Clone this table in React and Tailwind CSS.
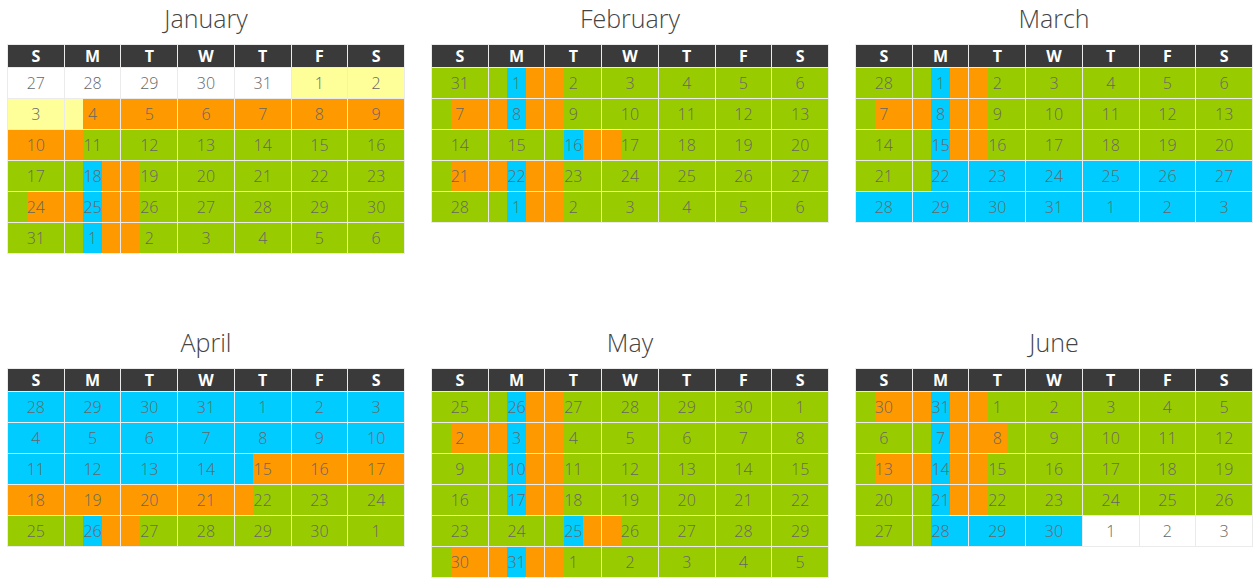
import React from "react";

const COLORS = {
  g: "bg-[#99cc00]",
  o: "bg-[#ff9900]",
  b: "bg-[#00ccff]",
  y: "bg-[#ffff99]",
  w: "bg-white",
};

const DAYS = ["S", "M", "T", "W", "T", "F", "S"];

const months = [
  {
    name: "January",
    rows: [
      "27:w 28:w 29:w 30:w 31:w 1:y 2:y",
      "3:y 4:yoo 5:o 6:o 7:o 8:o 9:o",
      "10:o 11:ogg 12:g 13:g 14:g 15:g 16:g",
      "17:g 18:gbo 19:ogg 20:g 21:g 22:g 23:g",
      "24:goo 25:obo 26:ogg 27:g 28:g 29:g 30:g",
      "31:g 1:gbo 2:ogg 3:g 4:g 5:g 6:g",
    ],
  },
  {
    name: "February",
    rows: [
      "31:g 1:gbo 2:ogg 3:g 4:g 5:g 6:g",
      "7:goo 8:obo 9:ogg 10:g 11:g 12:g 13:g",
      "14:g 15:g 16:gbo 17:ogg 18:g 19:g 20:g",
      "21:goo 22:obo 23:ogg 24:g 25:g 26:g 27:g",
      "28:g 1:gbo 2:ogg 3:g 4:g 5:g 6:g",
    ],
  },
  {
    name: "March",
    rows: [
      "28:g 1:gbo 2:ogg 3:g 4:g 5:g 6:g",
      "7:goo 8:obo 9:ogg 10:g 11:g 12:g 13:g",
      "14:g 15:gbo 16:ogg 17:g 18:g 19:g 20:g",
      "21:g 22:gbb 23:b 24:b 25:b 26:b 27:b",
      "28:b 29:b 30:b 31:b 1:b 2:b 3:b",
    ],
  },
  {
    name: "April",
    rows: [
      "28:b 29:b 30:b 31:b 1:b 2:b 3:b",
      "4:b 5:b 6:b 7:b 8:b 9:b 10:b",
      "11:b 12:b 13:b 14:b 15:boo 16:o 17:o",
      "18:o 19:o 20:o 21:o 22:ogg 23:g 24:g",
      "25:g 26:gbo 27:ogg 28:g 29:g 30:g 1:g",
    ],
  },
  {
    name: "May",
    rows: [
      "25:g 26:gbo 27:ogg 28:g 29:g 30:g 1:g",
      "2:goo 3:obo 4:ogg 5:g 6:g 7:g 8:g",
      "9:g 10:gbo 11:ogg 12:g 13:g 14:g 15:g",
      "16:g 17:gbo 18:ogg 19:g 20:g 21:g 22:g",
      "23:g 24:g 25:gbo 26:ogg 27:g 28:g 29:g",
      "30:goo 31:obo 1:ogg 2:g 3:g 4:g 5:g",
    ],
  },
  {
    name: "June",
    rows: [
      "30:goo 31:obo 1:ogg 2:g 3:g 4:g 5:g",
      "6:g 7:gbo 8:oog 9:g 10:g 11:g 12:g",
      "13:goo 14:obo 15:ogg 16:g 17:g 18:g 19:g",
      "20:g 21:gbo 22:ogg 23:g 24:g 25:g 26:g",
      "27:g 28:gbb 29:b 30:b 1:w 2:w 3:w",
    ],
  },
];

function DayCell({ spec }) {
  const [num, code] = spec.split(":");
  const parts = code.length === 1 ? [code, code, code] : code.split("");
  return (
    <div className="grid h-[30px]">
      <div className="flex [grid-area:1/1]">
        {parts.map((c, i) => (
          <div key={i} className={`flex-1 ${COLORS[c]}`} />
        ))}
      </div>
      <span className="[grid-area:1/1] flex items-center justify-center text-[16px] font-light text-[#666]">
        {num}
      </span>
    </div>
  );
}

function MonthCal({ month }) {
  return (
    <div className="w-[398px]">
      <div className="flex h-[44px] items-center justify-center pb-[6px] text-[25px] font-light text-[#444]">
        {month.name}
      </div>
      <div className="grid grid-cols-7 gap-px bg-[#ebebeb] p-px">
        {DAYS.map((d, i) => (
          <div
            key={i}
            className="flex h-[22px] items-center justify-center bg-[#3a3a3a] text-[16px] font-bold text-white"
          >
            {d}
          </div>
        ))}
        {month.rows.map((row, r) =>
          row.split(" ").map((spec, i) => <DayCell key={r + "-" + i} spec={spec} />)
        )}
      </div>
    </div>
  );
}

export default function App() {
  return (
    <div className="min-h-[584px] bg-white pl-[7px] font-['Open_Sans',sans-serif]">
      <div className="grid grid-cols-[398px_398px_398px] items-start gap-x-[26px] gap-y-[70px]">
        {months.map((m) => (
          <MonthCal key={m.name} month={m} />
        ))}
      </div>
    </div>
  );
}
